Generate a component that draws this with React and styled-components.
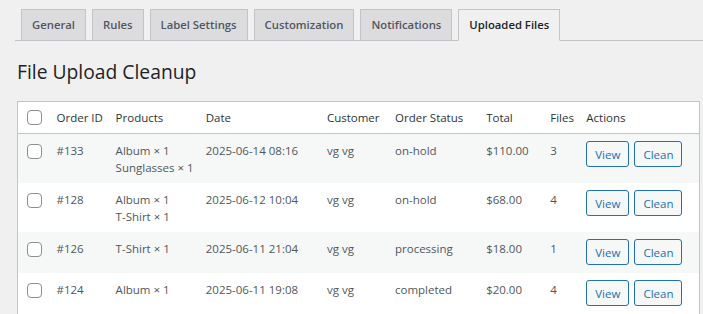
import styled, { createGlobalStyle } from 'styled-components';

const GlobalStyle = createGlobalStyle`
  body {
    margin: 0;
    background: #f0f0f1;
    font-family: "Open Sans", "Noto Sans", sans-serif;
    color: #3c434a;
  }
`;

const tabs = ['General', 'Rules', 'Label Settings', 'Customization', 'Notifications', 'Uploaded Files'];

const orders = [
  { id: '#133', products: ['Album × 1', 'Sunglasses × 1'], date: '2025-06-14 08:16', status: 'on-hold', total: '$110.00', files: 3 },
  { id: '#128', products: ['Album × 1', 'T-Shirt × 1'], date: '2025-06-12 10:04', status: 'on-hold', total: '$68.00', files: 4 },
  { id: '#126', products: ['T-Shirt × 1'], date: '2025-06-11 21:04', status: 'processing', total: '$18.00', files: 1 },
  { id: '#124', products: ['Album × 1'], date: '2025-06-11 19:08', status: 'completed', total: '$20.00', files: 4 },
];

const App = () => {
  return (
    <Wrap>
      <GlobalStyle />
      <TabBar>
        {tabs.map((t) => (
          <Tab key={t} $active={t === 'Uploaded Files'}>{t}</Tab>
        ))}
      </TabBar>
      <Title>File Upload Cleanup</Title>
      <Table>
        <colgroup>
          <col style={{ width: 31 }} />
          <col style={{ width: 59 }} />
          <col style={{ width: 90 }} />
          <col style={{ width: 121 }} />
          <col style={{ width: 68 }} />
          <col style={{ width: 91 }} />
          <col style={{ width: 64 }} />
          <col style={{ width: 36 }} />
          <col style={{ width: 121 }} />
        </colgroup>
        <thead>
          <tr>
            <HeadCheck><Check type="checkbox" /></HeadCheck>
            <Th>Order ID</Th>
            <Th>Products</Th>
            <Th>Date</Th>
            <Th>Customer</Th>
            <Th>Order Status</Th>
            <Th>Total</Th>
            <Th>Files</Th>
            <Th>Actions</Th>
          </tr>
        </thead>
        <tbody>
          {orders.map((o) => (
            <Row key={o.id}>
              <CheckCell><Check type="checkbox" /></CheckCell>
              <Td>{o.id}</Td>
              <Td>
                {o.products.map((p) => (
                  <div key={p}>{p}</div>
                ))}
              </Td>
              <Td>{o.date}</Td>
              <Td>vg vg</Td>
              <Td>{o.status}</Td>
              <Td>{o.total}</Td>
              <Td>{o.files}</Td>
              <ActionCell>
                <Actions>
                  <Button>View</Button>
                  <Button>Clean</Button>
                </Actions>
              </ActionCell>
            </Row>
          ))}
        </tbody>
      </Table>
    </Wrap>
  );
};

export default App;

const Wrap = styled.div`
  padding: 9px 0 0 15px;
`;

const TabBar = styled.nav`
  display: flex;
  border-bottom: 1px solid #c3c4c7;
`;

const Tab = styled.a`
  margin-left: 6px;
  margin-bottom: -1px;
  padding: 4px 10px;
  line-height: 22px;
  font-size: 11.3px;
  font-weight: 600;
  color: ${(p) => (p.$active ? '#1d2327' : '#50575e')};
  background: ${(p) => (p.$active ? '#f0f0f1' : '#dcdcde')};
  border: 1px solid #c3c4c7;
  border-bottom-color: ${(p) => (p.$active ? '#f0f0f1' : '#c3c4c7')};
  white-space: nowrap;
`;

const Title = styled.h1`
  margin: 16px 0 14px 2px;
  font-size: 19.3px;
  font-weight: 400;
  line-height: 30px;
  color: #1d2327;
`;

const Table = styled.table`
  width: 683px;
  margin-left: 2px;
  table-layout: fixed;
  border-collapse: collapse;
  background: #fff;
  border: 1px solid #c3c4c7;
  font-size: 11.5px;
  line-height: 17px;
`;

const Th = styled.th`
  padding: 7px 8px;
  text-align: left;
  font-weight: 400;
  color: #2c3338;
  border-bottom: 1px solid #c3c4c7;
  white-space: nowrap;
  vertical-align: middle;
`;

const HeadCheck = styled(Th)`
  padding: 7px 0 7px 9px;
`;

const Row = styled.tr`
  &:nth-child(odd) {
    background: #f6f7f7;
  }
`;

const Td = styled.td`
  padding: 8px 8px 7px;
  vertical-align: top;
  color: #50575e;
  white-space: nowrap;
`;

const CheckCell = styled(Td)`
  padding: 10px 0 0 9px;
`;

const ActionCell = styled(Td)`
  padding: 7px 8px 8px;
`;

const Actions = styled.div`
  display: flex;
  gap: 5px;
`;

const Check = styled.input`
  appearance: none;
  display: block;
  margin: 0;
  width: 15px;
  height: 15px;
  border: 1px solid #8c8f94;
  border-radius: 4px;
  background: #fff;
`;

const Button = styled.button`
  height: 26px;
  padding: 0 8px;
  font-family: inherit;
  font-size: 11.5px;
  color: #2271b1;
  background: #f6f7f7;
  border: 1px solid #2271b1;
  border-radius: 3px;
`;
